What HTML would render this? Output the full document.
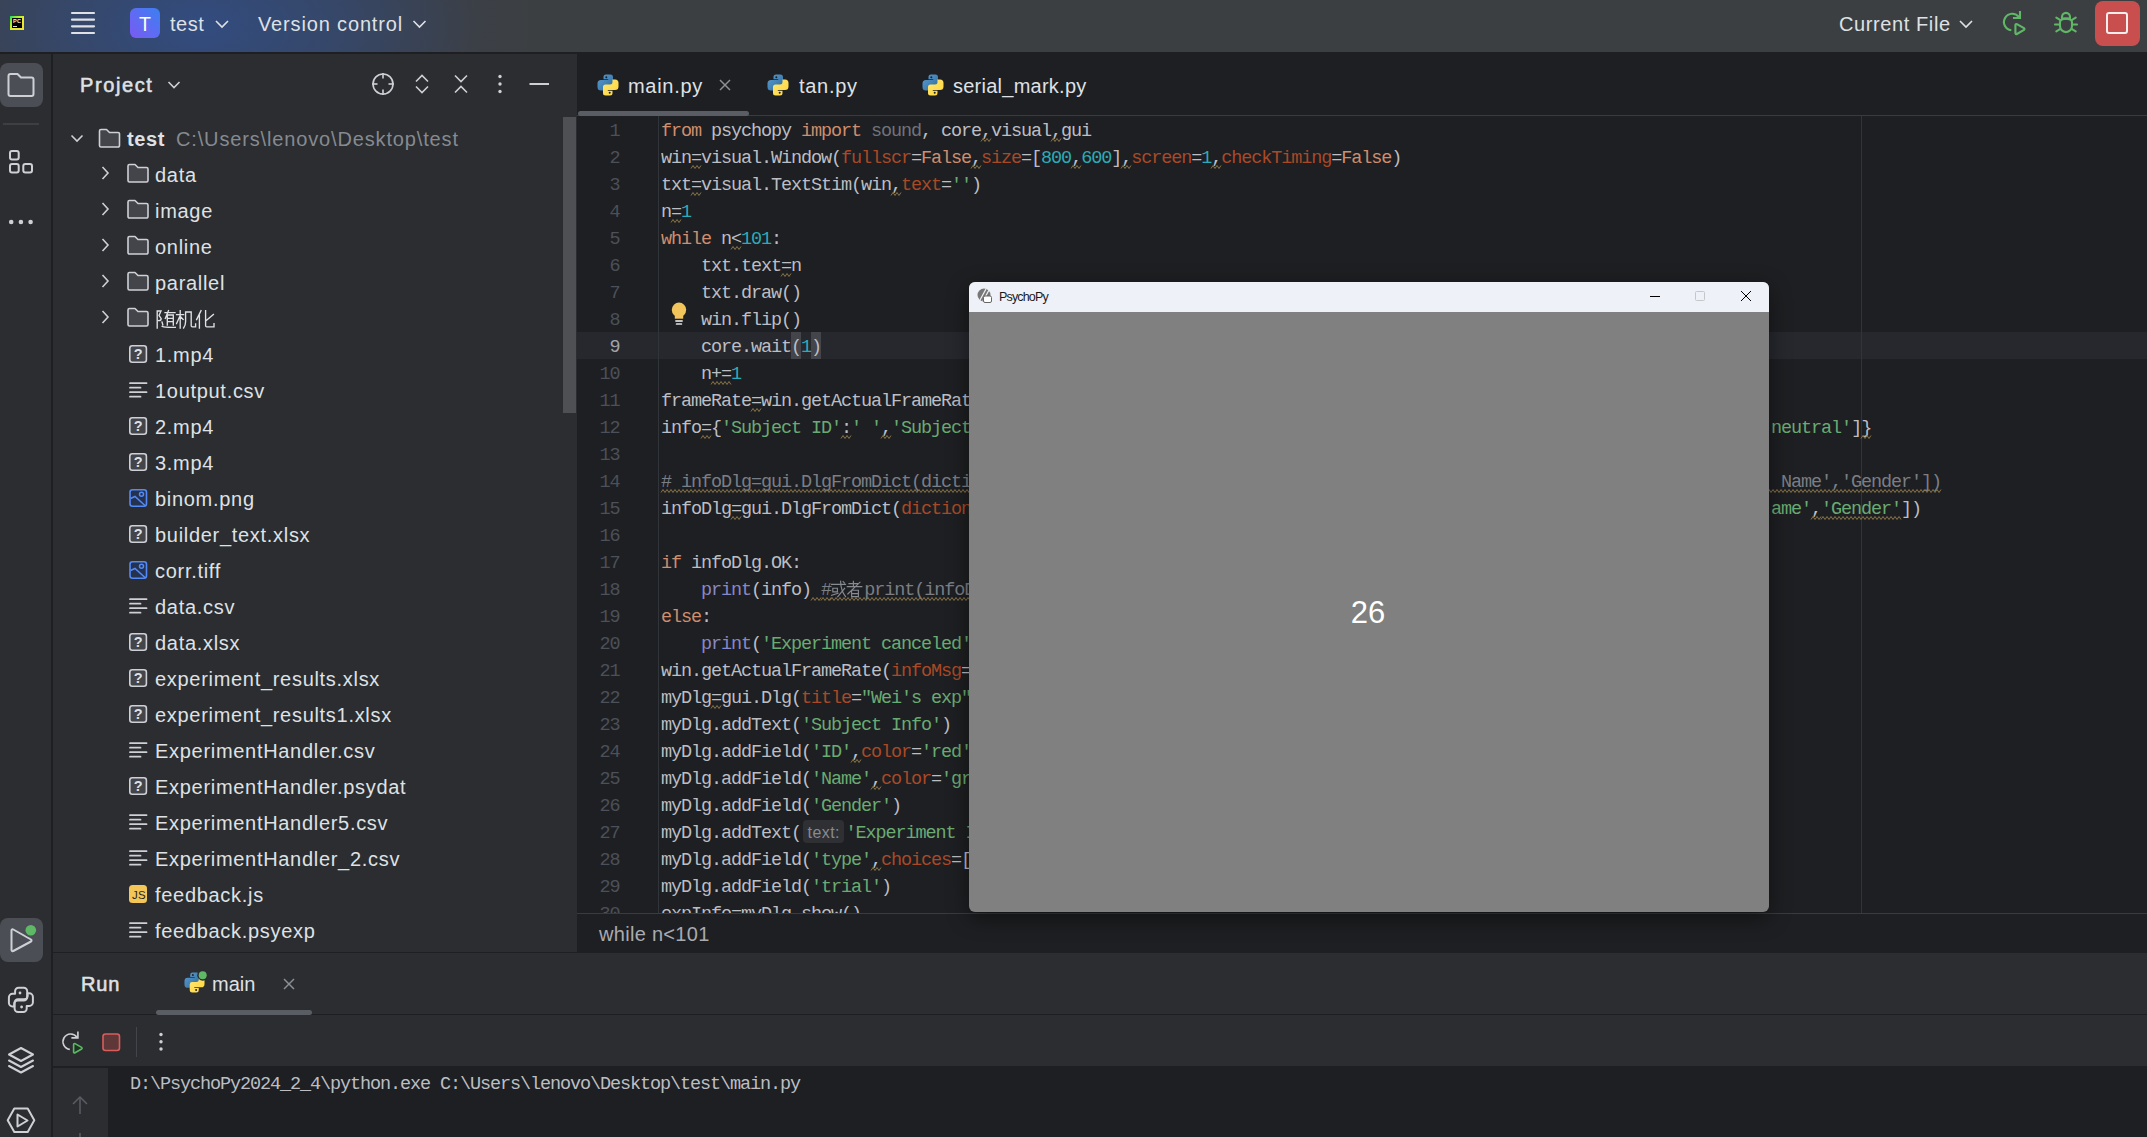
<!DOCTYPE html>
<html><head><meta charset="utf-8">
<style>
*{margin:0;padding:0;box-sizing:border-box}
html,body{width:2147px;height:1137px;overflow:hidden;background:#1e1f22}
body{position:relative;font-family:"Liberation Sans",sans-serif;color:#dfe1e5}
.a{position:absolute}
.t{position:absolute;white-space:pre;font-size:20px;line-height:20px}
svg{position:absolute;overflow:visible}
#title{left:0;top:0;width:2147px;height:52px;background:#3c3f41;overflow:hidden}
#title .glow{left:-150px;top:-170px;width:700px;height:392px;background:radial-gradient(closest-side,rgba(47,80,145,0.78) 0%,rgba(50,76,130,0.6) 40%,rgba(58,66,90,0.2) 80%,rgba(60,63,65,0) 100%)}
#strip{left:0;top:54px;width:51px;height:1083px;background:#2b2d30}
#proj{left:53px;top:54px;width:524px;height:898px;background:#2b2d30;overflow:hidden}
#editor{left:577px;top:54px;width:1570px;height:898px;background:#1e1f22;overflow:hidden}
#run{left:53px;top:953px;width:2094px;height:184px;background:#2b2d30;overflow:hidden}
.code{font-family:"Liberation Mono",monospace;font-size:18.5px;letter-spacing:-1.1017px;white-space:pre;color:#bcbec4}
.ln{position:absolute;height:27px;line-height:27px}
.kw{color:#cf8e6d}.num{color:#2aacb8}.str{color:#6aab73}.par{color:#aa4926}.cm{color:#7a7e85}.bi{color:#8888c6}.un{color:#6f737a}
.wv{text-decoration:underline wavy rgba(190,160,90,0.75);text-decoration-thickness:1px;text-underline-offset:3px}
</style></head><body>

<!-- TITLE BAR -->
<div id="title" class="a">
  <div class="a glow"></div>
  <!-- PC logo -->
  <div class="a" style="left:10px;top:16px;width:14.2px;height:14.2px;background:linear-gradient(135deg,#22d35a 0%,#9cf02a 28%,#e8ea2e 55%,#f2e232 100%)"></div>
  <div class="a" style="left:12.2px;top:18.2px;width:9.8px;height:9.8px;background:#000"></div>
  <div class="a" style="left:13px;top:19px;font:bold 5.6px/5.6px 'Liberation Sans';color:#eee;letter-spacing:0.2px">PC</div>
  <div class="a" style="left:13.2px;top:25.8px;width:3.6px;height:1px;background:#ddd"></div>
  <!-- hamburger -->
  <svg style="left:0;top:0" width="1" height="1"><g stroke="#dfe1e5" stroke-width="2.2" stroke-linecap="round"><line x1="72" y1="13" x2="94" y2="13"/><line x1="72" y1="19.7" x2="94" y2="19.7"/><line x1="72" y1="26.3" x2="94" y2="26.3"/><line x1="72" y1="33" x2="94" y2="33"/></g></svg>
  <!-- T badge -->
  <div class="a" style="left:130px;top:8px;width:30px;height:30px;border-radius:6px;background:linear-gradient(45deg,#7a5af2 0%,#5c6df3 50%,#3b7ff2 100%)"></div>
  <div class="t" style="left:130px;top:13.8px;width:30px;text-align:center;color:#fff;font-size:19.5px">T</div>
  <div class="t" style="left:170px;top:14px;letter-spacing:0.5px">test</div>
  <svg style="left:0;top:0" width="1" height="1"><polyline points="216,21 222,27 228,21" fill="none" stroke="#dfe1e5" stroke-width="1.6"/></svg>
  <div class="t" style="left:258px;top:14px;letter-spacing:0.85px">Version control</div>
  <svg style="left:0;top:0" width="1" height="1"><polyline points="413.5,21 419.5,27 425.5,21" fill="none" stroke="#dfe1e5" stroke-width="1.6"/></svg>
  <div class="t" style="left:1839px;top:14px;letter-spacing:0.6px">Current File</div>
  <svg style="left:0;top:0" width="1" height="1"><polyline points="1960,21 1966,27 1972,21" fill="none" stroke="#dfe1e5" stroke-width="1.6"/></svg>
  <!-- rerun green -->
  <svg style="left:0;top:0" width="1" height="1"><g fill="none" stroke="#5fb865" stroke-width="2.1" stroke-linejoin="round">
    <path d="M2011.3,30.3 A8.3,8.3 0 1 1 2019,17.2"/><polyline points="2020,11 2020,18 2013,18" stroke-linejoin="miter"/>
    <path d="M2015.4,25 a1,1 0 0 1 1.5,-0.9 L2024,28.2 a1,1 0 0 1 0,1.7 L2016.9,34 a1,1 0 0 1 -1.5,-0.9 Z"/></g></svg>
  <!-- bug -->
  <svg style="left:0;top:0" width="1" height="1"><g fill="none" stroke="#5fb865" stroke-width="2.1" stroke-linecap="round">
    <path d="M2060,22.1 a6,3.5 0 0 1 12,0 v4 a6,6 0 0 1 -12,0 z"/><path d="M2062,18.6 v-1.6 a4,4.1 0 0 1 8,0 v1.6 z"/>
    <line x1="2055" y1="24.5" x2="2059.5" y2="24.5"/><line x1="2072.5" y1="24.5" x2="2077" y2="24.5"/>
    <line x1="2056.3" y1="17.6" x2="2060" y2="19.8"/><line x1="2075.7" y1="17.6" x2="2072" y2="19.8"/>
    <line x1="2056.3" y1="31.3" x2="2060" y2="29.2"/><line x1="2075.7" y1="31.3" x2="2072" y2="29.2"/>
    </g></svg>
  <!-- stop -->
  <div class="a" style="left:2095px;top:1px;width:45px;height:45px;border-radius:8px;background:#c94f4f"></div>
  <div class="a" style="left:2106px;top:12px;width:22px;height:22px;border-radius:3px;border:2.2px solid #eee"></div>
</div>

<!-- LEFT STRIP -->
<div id="strip" class="a"></div>
<div class="a" style="left:0;top:63px;width:43px;height:44px;border-radius:8px;background:#4b4e54"></div>
<svg style="left:0;top:0" width="1" height="1"><g fill="none" stroke="#ced0d6" stroke-width="2" stroke-linejoin="round">
  <path d="M8.5,76 a2,2 0 0 1 2,-2 h7 l3.5,3.5 h10.5 a2,2 0 0 1 2,2 v14.5 a2,2 0 0 1 -2,2 h-21 a2,2 0 0 1 -2,-2 z"/></g></svg>
<div class="a" style="left:3px;top:123px;width:36px;height:2px;background:#3d3f43"></div>
<svg style="left:0;top:0" width="1" height="1"><g fill="none" stroke="#ced0d6" stroke-width="2">
  <rect x="10" y="151" width="8.7" height="8.5" rx="2"/><rect x="10" y="164" width="8.7" height="8.5" rx="2"/><rect x="23.3" y="164" width="8.7" height="8.5" rx="2"/></g>
  <g fill="#ced0d6"><circle cx="11.2" cy="222" r="2.3"/><circle cx="20.9" cy="222" r="2.3"/><circle cx="30.6" cy="222" r="2.3"/></g></svg>
<div class="a" style="left:0;top:918px;width:43px;height:44px;border-radius:8px;background:#4b4e54"></div>
<svg style="left:0;top:0" width="1" height="1">
  <path d="M11.5,930.5 L11.5,950 a1.2,1.2 0 0 0 1.8,1 L31,941.5 a1.2,1.2 0 0 0 0,-2 L13.3,929.5 a1.2,1.2 0 0 0 -1.8,1 z" fill="none" stroke="#ced0d6" stroke-width="2" stroke-linejoin="round"/>
  <circle cx="30.8" cy="930.3" r="7" fill="#4b4e54"/><circle cx="30.8" cy="930.3" r="5.3" fill="#5fb865"/>
  <!-- python console -->
  <g fill="none" stroke="#ced0d6" stroke-width="2" stroke-linejoin="round">
   <path d="M27.2,997 V991.2 A3.5,3.5 0 0 0 23.7,987.7 H18.6 A3.5,3.5 0 0 0 15.1,991.2 V993.8 H12.5 A3.6,3.6 0 0 0 8.9,997.4 V1002.8 A3.6,3.6 0 0 0 12.5,1006.4 H14.2 V1004 A3.5,3.5 0 0 1 17.7,1000.5 H23.7 A3.5,3.5 0 0 0 27.2,997 Z"/>
   <path transform="rotate(180 20.9 999.85)" d="M27.2,997 V991.2 A3.5,3.5 0 0 0 23.7,987.7 H18.6 A3.5,3.5 0 0 0 15.1,991.2 V993.8 H12.5 A3.6,3.6 0 0 0 8.9,997.4 V1002.8 A3.6,3.6 0 0 0 12.5,1006.4 H14.2 V1004 A3.5,3.5 0 0 1 17.7,1000.5 H23.7 A3.5,3.5 0 0 0 27.2,997 Z"/>
  </g>
  <circle cx="20" cy="993" r="1.4" fill="#ced0d6"/><circle cx="21.6" cy="1007" r="1.4" fill="#ced0d6"/>
  <!-- layers -->
  <g fill="none" stroke="#ced0d6" stroke-width="2" stroke-linejoin="round" stroke-linecap="round">
   <path d="M21,1048 L33,1054.5 L21,1061 L9,1054.5 Z"/><path d="M9,1060.5 L21,1067 L33,1060.5"/><path d="M9,1066 L21,1072.5 L33,1066"/>
  </g>
  <!-- services -->
  <g fill="none" stroke="#ced0d6" stroke-width="2" stroke-linejoin="round">
   <path d="M14.3,1108.6 h13.4 l6.6,11.7 l-6.6,11.7 h-13.4 l-6.6,-11.7 z"/><path d="M17.5,1114.5 v12 l10,-6 z"/>
  </g>
</svg>

<!-- PROJECT PANEL -->
<div id="proj" class="a"></div>
<div class="t" style="left:80px;top:75px;letter-spacing:1.6px;-webkit-text-stroke:0.55px #dfe1e5">Project</div>
<svg style="left:0;top:0" width="1" height="1"><g fill="none" stroke="#ced0d6" stroke-width="1.6"><polyline points="168.5,82 174,87.5 179.5,82"/><circle cx="383" cy="84" r="10"/><line x1="383" y1="73" x2="383" y2="78.5"/><line x1="383" y1="89.5" x2="383" y2="95"/><line x1="372" y1="84" x2="377.5" y2="84"/><line x1="388.5" y1="84" x2="394" y2="84"/><polyline points="416,81.5 422,75.5 428,81.5"/><polyline points="416,86.5 422,92.5 428,86.5"/><polyline points="455,75.5 461,81.5 467,75.5"/><polyline points="455,92.5 461,86.5 467,92.5"/><line x1="529.5" y1="84" x2="549" y2="84" stroke-width="2"/></g><g fill="#ced0d6"><circle cx="500" cy="76.5" r="1.7"/><circle cx="500" cy="84" r="1.7"/><circle cx="500" cy="91.5" r="1.7"/></g></svg>
<div class="a" style="left:563px;top:117px;width:13px;height:296px;background:#4f5054"></div>
<svg style="left:0;top:0" width="1" height="1"><polyline points="71.5,135.5 77,141 82.5,135.5" fill="none" stroke="#ced0d6" stroke-width="1.6"/><path d="M99.5,131 a1.5,1.5 0 0 1 1.5,-1.5 h5.5 l3,3 h8.5 a1.5,1.5 0 0 1 1.5,1.5 v11.5 a1.5,1.5 0 0 1 -1.5,1.5 h-17 a1.5,1.5 0 0 1 -1.5,-1.5 z" fill="#43454a" stroke="#ced0d6" stroke-width="1.6" stroke-linejoin="round"/></svg>
<div class="t" style="left:127px;top:129px;font-weight:bold;letter-spacing:0.6px">test</div>
<div class="t" style="left:176px;top:129px;color:#868a91;letter-spacing:0.85px">C:\Users\lenovo\Desktop\test</div>
<svg style="left:0;top:0" width="1" height="1"><polyline points="102.5,167.0 108,173.0 102.5,179.0" fill="none" stroke="#ced0d6" stroke-width="1.6"/><path d="M128,166.0 a1.5,1.5 0 0 1 1.5,-1.5 h5.5 l3,3 h8.5 a1.5,1.5 0 0 1 1.5,1.5 v11.5 a1.5,1.5 0 0 1 -1.5,1.5 h-17 a1.5,1.5 0 0 1 -1.5,-1.5 z" fill="#43454a" stroke="#ced0d6" stroke-width="1.6" stroke-linejoin="round"/></svg>
<div class="t" style="left:155px;top:165px;letter-spacing:0.7px">data</div>
<svg style="left:0;top:0" width="1" height="1"><polyline points="102.5,203.0 108,209.0 102.5,215.0" fill="none" stroke="#ced0d6" stroke-width="1.6"/><path d="M128,202.0 a1.5,1.5 0 0 1 1.5,-1.5 h5.5 l3,3 h8.5 a1.5,1.5 0 0 1 1.5,1.5 v11.5 a1.5,1.5 0 0 1 -1.5,1.5 h-17 a1.5,1.5 0 0 1 -1.5,-1.5 z" fill="#43454a" stroke="#ced0d6" stroke-width="1.6" stroke-linejoin="round"/></svg>
<div class="t" style="left:155px;top:201px;letter-spacing:0.7px">image</div>
<svg style="left:0;top:0" width="1" height="1"><polyline points="102.5,239.0 108,245.0 102.5,251.0" fill="none" stroke="#ced0d6" stroke-width="1.6"/><path d="M128,238.0 a1.5,1.5 0 0 1 1.5,-1.5 h5.5 l3,3 h8.5 a1.5,1.5 0 0 1 1.5,1.5 v11.5 a1.5,1.5 0 0 1 -1.5,1.5 h-17 a1.5,1.5 0 0 1 -1.5,-1.5 z" fill="#43454a" stroke="#ced0d6" stroke-width="1.6" stroke-linejoin="round"/></svg>
<div class="t" style="left:155px;top:237px;letter-spacing:0.7px">online</div>
<svg style="left:0;top:0" width="1" height="1"><polyline points="102.5,275.0 108,281.0 102.5,287.0" fill="none" stroke="#ced0d6" stroke-width="1.6"/><path d="M128,274.0 a1.5,1.5 0 0 1 1.5,-1.5 h5.5 l3,3 h8.5 a1.5,1.5 0 0 1 1.5,1.5 v11.5 a1.5,1.5 0 0 1 -1.5,1.5 h-17 a1.5,1.5 0 0 1 -1.5,-1.5 z" fill="#43454a" stroke="#ced0d6" stroke-width="1.6" stroke-linejoin="round"/></svg>
<div class="t" style="left:155px;top:273px;letter-spacing:0.7px">parallel</div>
<svg style="left:0;top:0" width="1" height="1"><polyline points="102.5,311.0 108,317.0 102.5,323.0" fill="none" stroke="#ced0d6" stroke-width="1.6"/><path d="M128,310.0 a1.5,1.5 0 0 1 1.5,-1.5 h5.5 l3,3 h8.5 a1.5,1.5 0 0 1 1.5,1.5 v11.5 a1.5,1.5 0 0 1 -1.5,1.5 h-17 a1.5,1.5 0 0 1 -1.5,-1.5 z" fill="#43454a" stroke="#ced0d6" stroke-width="1.6" stroke-linejoin="round"/></svg>
<svg style="left:0;top:0" width="1" height="1"><g fill="none" stroke="#dfe1e5" stroke-width="1.35" stroke-linecap="square"><g transform="translate(156,310)"><path d="M1.2,18 V1 H5 L3,5.5 L5.2,8.6 Q5,10.8 2.6,10.6"/><path d="M9,2.6 H19 M12.5,0.6 L9.3,8.4 M11.3,15 V5 H17.3 V15 M11.3,8.3 H17.3 M11.3,11.6 H17.3 M6,12 L6.8,14.8 M6.2,16.4 Q9,17.6 19.3,17.3"/></g><g transform="translate(176,310)"><path d="M0.6,4.6 H7.6 M4.2,0.6 V18 M4,5.8 L0.6,13.5 M4.6,6.8 L7.2,9.4 M9.6,2 V11.5 Q9.6,15.5 7.6,18 M9.6,2 H15.2 V15.8 Q15.2,16.8 16.4,16.8 H19.6 V14"/></g><g transform="translate(196,310)"><path d="M5,0.6 L0.6,9.6 M3.4,5.4 V18 M9.6,0.6 V15.8 Q9.6,16.9 10.8,16.9 H18 V13.6 M17.4,4.4 L9.6,11"/></g></g></svg>
<svg style="left:0;top:0" width="1" height="1"><rect x="129.8" y="345.7" width="16.6" height="16.6" rx="2.5" fill="#43454a" stroke="#ced0d6" stroke-width="1.6"/><text x="138.1" y="359.2" text-anchor="middle" font-family="Liberation Sans" font-weight="bold" font-size="14.5" fill="#dfe1e5">?</text></svg>
<div class="t" style="left:155px;top:345px;letter-spacing:0.7px">1.mp4</div>
<svg style="left:0;top:0" width="1" height="1"><g stroke="#ced0d6" stroke-width="1.8" stroke-linecap="round"><line x1="130" y1="383.2" x2="146.5" y2="383.2"/><line x1="130" y1="387.7" x2="140.5" y2="387.7"/><line x1="130" y1="392.2" x2="146.5" y2="392.2"/><line x1="130" y1="396.7" x2="140.5" y2="396.7"/></g></svg>
<div class="t" style="left:155px;top:381px;letter-spacing:0.7px">1output.csv</div>
<svg style="left:0;top:0" width="1" height="1"><rect x="129.8" y="417.7" width="16.6" height="16.6" rx="2.5" fill="#43454a" stroke="#ced0d6" stroke-width="1.6"/><text x="138.1" y="431.2" text-anchor="middle" font-family="Liberation Sans" font-weight="bold" font-size="14.5" fill="#dfe1e5">?</text></svg>
<div class="t" style="left:155px;top:417px;letter-spacing:0.7px">2.mp4</div>
<svg style="left:0;top:0" width="1" height="1"><rect x="129.8" y="453.7" width="16.6" height="16.6" rx="2.5" fill="#43454a" stroke="#ced0d6" stroke-width="1.6"/><text x="138.1" y="467.2" text-anchor="middle" font-family="Liberation Sans" font-weight="bold" font-size="14.5" fill="#dfe1e5">?</text></svg>
<div class="t" style="left:155px;top:453px;letter-spacing:0.7px">3.mp4</div>
<svg style="left:0;top:0" width="1" height="1"><rect x="130" y="489.8" width="16.5" height="16.5" rx="2.5" fill="#25324d" stroke="#548af7" stroke-width="1.6"/><circle cx="141.5" cy="494.2" r="2" fill="none" stroke="#548af7" stroke-width="1.5"/><polyline points="130.5,498.5 135,496.5 145.5,506.0" fill="none" stroke="#548af7" stroke-width="1.5"/></svg>
<div class="t" style="left:155px;top:489px;letter-spacing:0.7px">binom.png</div>
<svg style="left:0;top:0" width="1" height="1"><rect x="129.8" y="525.7" width="16.6" height="16.6" rx="2.5" fill="#43454a" stroke="#ced0d6" stroke-width="1.6"/><text x="138.1" y="539.2" text-anchor="middle" font-family="Liberation Sans" font-weight="bold" font-size="14.5" fill="#dfe1e5">?</text></svg>
<div class="t" style="left:155px;top:525px;letter-spacing:0.7px">builder_text.xlsx</div>
<svg style="left:0;top:0" width="1" height="1"><rect x="130" y="561.8" width="16.5" height="16.5" rx="2.5" fill="#25324d" stroke="#548af7" stroke-width="1.6"/><circle cx="141.5" cy="566.2" r="2" fill="none" stroke="#548af7" stroke-width="1.5"/><polyline points="130.5,570.5 135,568.5 145.5,578.0" fill="none" stroke="#548af7" stroke-width="1.5"/></svg>
<div class="t" style="left:155px;top:561px;letter-spacing:0.7px">corr.tiff</div>
<svg style="left:0;top:0" width="1" height="1"><g stroke="#ced0d6" stroke-width="1.8" stroke-linecap="round"><line x1="130" y1="599.2" x2="146.5" y2="599.2"/><line x1="130" y1="603.7" x2="140.5" y2="603.7"/><line x1="130" y1="608.2" x2="146.5" y2="608.2"/><line x1="130" y1="612.7" x2="140.5" y2="612.7"/></g></svg>
<div class="t" style="left:155px;top:597px;letter-spacing:0.7px">data.csv</div>
<svg style="left:0;top:0" width="1" height="1"><rect x="129.8" y="633.7" width="16.6" height="16.6" rx="2.5" fill="#43454a" stroke="#ced0d6" stroke-width="1.6"/><text x="138.1" y="647.2" text-anchor="middle" font-family="Liberation Sans" font-weight="bold" font-size="14.5" fill="#dfe1e5">?</text></svg>
<div class="t" style="left:155px;top:633px;letter-spacing:0.7px">data.xlsx</div>
<svg style="left:0;top:0" width="1" height="1"><rect x="129.8" y="669.7" width="16.6" height="16.6" rx="2.5" fill="#43454a" stroke="#ced0d6" stroke-width="1.6"/><text x="138.1" y="683.2" text-anchor="middle" font-family="Liberation Sans" font-weight="bold" font-size="14.5" fill="#dfe1e5">?</text></svg>
<div class="t" style="left:155px;top:669px;letter-spacing:0.7px">experiment_results.xlsx</div>
<svg style="left:0;top:0" width="1" height="1"><rect x="129.8" y="705.7" width="16.6" height="16.6" rx="2.5" fill="#43454a" stroke="#ced0d6" stroke-width="1.6"/><text x="138.1" y="719.2" text-anchor="middle" font-family="Liberation Sans" font-weight="bold" font-size="14.5" fill="#dfe1e5">?</text></svg>
<div class="t" style="left:155px;top:705px;letter-spacing:0.7px">experiment_results1.xlsx</div>
<svg style="left:0;top:0" width="1" height="1"><g stroke="#ced0d6" stroke-width="1.8" stroke-linecap="round"><line x1="130" y1="743.2" x2="146.5" y2="743.2"/><line x1="130" y1="747.7" x2="140.5" y2="747.7"/><line x1="130" y1="752.2" x2="146.5" y2="752.2"/><line x1="130" y1="756.7" x2="140.5" y2="756.7"/></g></svg>
<div class="t" style="left:155px;top:741px;letter-spacing:0.7px">ExperimentHandler.csv</div>
<svg style="left:0;top:0" width="1" height="1"><rect x="129.8" y="777.7" width="16.6" height="16.6" rx="2.5" fill="#43454a" stroke="#ced0d6" stroke-width="1.6"/><text x="138.1" y="791.2" text-anchor="middle" font-family="Liberation Sans" font-weight="bold" font-size="14.5" fill="#dfe1e5">?</text></svg>
<div class="t" style="left:155px;top:777px;letter-spacing:0.7px">ExperimentHandler.psydat</div>
<svg style="left:0;top:0" width="1" height="1"><g stroke="#ced0d6" stroke-width="1.8" stroke-linecap="round"><line x1="130" y1="815.2" x2="146.5" y2="815.2"/><line x1="130" y1="819.7" x2="140.5" y2="819.7"/><line x1="130" y1="824.2" x2="146.5" y2="824.2"/><line x1="130" y1="828.7" x2="140.5" y2="828.7"/></g></svg>
<div class="t" style="left:155px;top:813px;letter-spacing:0.7px">ExperimentHandler5.csv</div>
<svg style="left:0;top:0" width="1" height="1"><g stroke="#ced0d6" stroke-width="1.8" stroke-linecap="round"><line x1="130" y1="851.2" x2="146.5" y2="851.2"/><line x1="130" y1="855.7" x2="140.5" y2="855.7"/><line x1="130" y1="860.2" x2="146.5" y2="860.2"/><line x1="130" y1="864.7" x2="140.5" y2="864.7"/></g></svg>
<div class="t" style="left:155px;top:849px;letter-spacing:0.7px">ExperimentHandler_2.csv</div>
<div class="a" style="left:129px;top:884.8px;width:18.2px;height:18.2px;border-radius:3.5px;background:#f4c657"></div><div class="a" style="left:131px;top:890.4px;width:16px;text-align:center;font:11.5px/11.5px 'Liberation Sans';color:#1e1f22;letter-spacing:0.3px">JS</div>
<div class="t" style="left:155px;top:885px;letter-spacing:0.7px">feedback.js</div>
<svg style="left:0;top:0" width="1" height="1"><g stroke="#ced0d6" stroke-width="1.8" stroke-linecap="round"><line x1="130" y1="923.2" x2="146.5" y2="923.2"/><line x1="130" y1="927.7" x2="140.5" y2="927.7"/><line x1="130" y1="932.2" x2="146.5" y2="932.2"/><line x1="130" y1="936.7" x2="140.5" y2="936.7"/></g></svg>
<div class="t" style="left:155px;top:921px;letter-spacing:0.7px">feedback.psyexp</div>

<!-- EDITOR -->
<div id="editor" class="a"></div>
<div class="a" style="left:577px;top:332px;width:1570px;height:27px;background:#26282e"></div>
<div class="a" style="left:790.5px;top:332px;width:10px;height:27px;background:#43454a"></div>
<div class="a" style="left:810.5px;top:332px;width:10px;height:27px;background:#43454a"></div>
<div class="a" style="left:658px;top:116px;width:1px;height:797px;background:#313438"></div>
<div class="a" style="left:1861px;top:116px;width:1px;height:797px;background:#313438"></div>
<div class="a" style="left:577px;top:115px;width:1570px;height:1px;background:#393b40"></div>
<div class="a" style="left:578px;top:111px;width:171px;height:5px;border-radius:2.5px;background:#5a5d63"></div>
<div class="a" style="left:577px;top:913px;width:1570px;height:1px;background:#393b40"></div>
<svg style="left:597.0px;top:74.0px" width="22" height="22" viewBox="0 0 22 22"><defs><linearGradient id="pb" x1="0" y1="0" x2="1" y2="1"><stop offset="0" stop-color="#5a9fd4"/><stop offset="1" stop-color="#306998"/></linearGradient><linearGradient id="py" x1="0" y1="0" x2="1" y2="1"><stop offset="0" stop-color="#ffe873"/><stop offset="1" stop-color="#ffd43b"/></linearGradient></defs><path d="M6.5,3 a2.5,2.5 0 0 1 2.5,-2.5 h4.5 a2.5,2.5 0 0 1 2.5,2.5 v6 a2.5,2.5 0 0 1 -2.5,2.5 h-4.5 a2.5,2.5 0 0 0 -2.5,2.5 v2.5 h-2.5 a3.5,3.5 0 0 1 -3.5,-3.5 v-3.5 a3.5,3.5 0 0 1 3.5,-3.5 h7.2 v-0.8 h-4.7 z" fill="url(#pb)"/><path d="M15.5,19 a2.5,2.5 0 0 1 -2.5,2.5 h-4.5 a2.5,2.5 0 0 1 -2.5,-2.5 v-6 a2.5,2.5 0 0 1 2.5,-2.5 h4.5 a2.5,2.5 0 0 0 2.5,-2.5 v-2.5 h2.5 a3.5,3.5 0 0 1 3.5,3.5 v3.5 a3.5,3.5 0 0 1 -3.5,3.5 h-7.2 v0.8 h4.7 z" fill="url(#py)"/><circle cx="9.3" cy="3.2" r="1" fill="#1e1f22"/><circle cx="12.7" cy="18.8" r="1" fill="#1e1f22"/></svg>
<div class="t" style="left:628px;top:76px;letter-spacing:0.7px">main.py</div>
<svg style="left:0;top:0" width="1" height="1"><g stroke="#8c8f94" stroke-width="1.5"><line x1="720" y1="80" x2="730" y2="90"/><line x1="730" y1="80" x2="720" y2="90"/></g></svg>
<svg style="left:767.0px;top:74.0px" width="22" height="22" viewBox="0 0 22 22"><defs><linearGradient id="pb" x1="0" y1="0" x2="1" y2="1"><stop offset="0" stop-color="#5a9fd4"/><stop offset="1" stop-color="#306998"/></linearGradient><linearGradient id="py" x1="0" y1="0" x2="1" y2="1"><stop offset="0" stop-color="#ffe873"/><stop offset="1" stop-color="#ffd43b"/></linearGradient></defs><path d="M6.5,3 a2.5,2.5 0 0 1 2.5,-2.5 h4.5 a2.5,2.5 0 0 1 2.5,2.5 v6 a2.5,2.5 0 0 1 -2.5,2.5 h-4.5 a2.5,2.5 0 0 0 -2.5,2.5 v2.5 h-2.5 a3.5,3.5 0 0 1 -3.5,-3.5 v-3.5 a3.5,3.5 0 0 1 3.5,-3.5 h7.2 v-0.8 h-4.7 z" fill="url(#pb)"/><path d="M15.5,19 a2.5,2.5 0 0 1 -2.5,2.5 h-4.5 a2.5,2.5 0 0 1 -2.5,-2.5 v-6 a2.5,2.5 0 0 1 2.5,-2.5 h4.5 a2.5,2.5 0 0 0 2.5,-2.5 v-2.5 h2.5 a3.5,3.5 0 0 1 3.5,3.5 v3.5 a3.5,3.5 0 0 1 -3.5,3.5 h-7.2 v0.8 h4.7 z" fill="url(#py)"/><circle cx="9.3" cy="3.2" r="1" fill="#1e1f22"/><circle cx="12.7" cy="18.8" r="1" fill="#1e1f22"/></svg>
<div class="t" style="left:799px;top:76px;letter-spacing:0.7px">tan.py</div>
<svg style="left:922.0px;top:74.0px" width="22" height="22" viewBox="0 0 22 22"><defs><linearGradient id="pb" x1="0" y1="0" x2="1" y2="1"><stop offset="0" stop-color="#5a9fd4"/><stop offset="1" stop-color="#306998"/></linearGradient><linearGradient id="py" x1="0" y1="0" x2="1" y2="1"><stop offset="0" stop-color="#ffe873"/><stop offset="1" stop-color="#ffd43b"/></linearGradient></defs><path d="M6.5,3 a2.5,2.5 0 0 1 2.5,-2.5 h4.5 a2.5,2.5 0 0 1 2.5,2.5 v6 a2.5,2.5 0 0 1 -2.5,2.5 h-4.5 a2.5,2.5 0 0 0 -2.5,2.5 v2.5 h-2.5 a3.5,3.5 0 0 1 -3.5,-3.5 v-3.5 a3.5,3.5 0 0 1 3.5,-3.5 h7.2 v-0.8 h-4.7 z" fill="url(#pb)"/><path d="M15.5,19 a2.5,2.5 0 0 1 -2.5,2.5 h-4.5 a2.5,2.5 0 0 1 -2.5,-2.5 v-6 a2.5,2.5 0 0 1 2.5,-2.5 h4.5 a2.5,2.5 0 0 0 2.5,-2.5 v-2.5 h2.5 a3.5,3.5 0 0 1 3.5,3.5 v3.5 a3.5,3.5 0 0 1 -3.5,3.5 h-7.2 v0.8 h4.7 z" fill="url(#py)"/><circle cx="9.3" cy="3.2" r="1" fill="#1e1f22"/><circle cx="12.7" cy="18.8" r="1" fill="#1e1f22"/></svg>
<div class="t" style="left:953px;top:76px;letter-spacing:0.25px">serial_mark.py</div>
<div class="a" style="left:0;top:116px;width:658px;height:797px;overflow:hidden">
<div class="code ln" style="left:559.5px;top:2px;width:60px;text-align:right;color:#4b5059">1</div>
<div class="code ln" style="left:559.5px;top:29px;width:60px;text-align:right;color:#4b5059">2</div>
<div class="code ln" style="left:559.5px;top:56px;width:60px;text-align:right;color:#4b5059">3</div>
<div class="code ln" style="left:559.5px;top:83px;width:60px;text-align:right;color:#4b5059">4</div>
<div class="code ln" style="left:559.5px;top:110px;width:60px;text-align:right;color:#4b5059">5</div>
<div class="code ln" style="left:559.5px;top:137px;width:60px;text-align:right;color:#4b5059">6</div>
<div class="code ln" style="left:559.5px;top:164px;width:60px;text-align:right;color:#4b5059">7</div>
<div class="code ln" style="left:559.5px;top:191px;width:60px;text-align:right;color:#4b5059">8</div>
<div class="code ln" style="left:559.5px;top:218px;width:60px;text-align:right;color:#a1a3ab">9</div>
<div class="code ln" style="left:559.5px;top:245px;width:60px;text-align:right;color:#4b5059">10</div>
<div class="code ln" style="left:559.5px;top:272px;width:60px;text-align:right;color:#4b5059">11</div>
<div class="code ln" style="left:559.5px;top:299px;width:60px;text-align:right;color:#4b5059">12</div>
<div class="code ln" style="left:559.5px;top:326px;width:60px;text-align:right;color:#4b5059">13</div>
<div class="code ln" style="left:559.5px;top:353px;width:60px;text-align:right;color:#4b5059">14</div>
<div class="code ln" style="left:559.5px;top:380px;width:60px;text-align:right;color:#4b5059">15</div>
<div class="code ln" style="left:559.5px;top:407px;width:60px;text-align:right;color:#4b5059">16</div>
<div class="code ln" style="left:559.5px;top:434px;width:60px;text-align:right;color:#4b5059">17</div>
<div class="code ln" style="left:559.5px;top:461px;width:60px;text-align:right;color:#4b5059">18</div>
<div class="code ln" style="left:559.5px;top:488px;width:60px;text-align:right;color:#4b5059">19</div>
<div class="code ln" style="left:559.5px;top:515px;width:60px;text-align:right;color:#4b5059">20</div>
<div class="code ln" style="left:559.5px;top:542px;width:60px;text-align:right;color:#4b5059">21</div>
<div class="code ln" style="left:559.5px;top:569px;width:60px;text-align:right;color:#4b5059">22</div>
<div class="code ln" style="left:559.5px;top:596px;width:60px;text-align:right;color:#4b5059">23</div>
<div class="code ln" style="left:559.5px;top:623px;width:60px;text-align:right;color:#4b5059">24</div>
<div class="code ln" style="left:559.5px;top:650px;width:60px;text-align:right;color:#4b5059">25</div>
<div class="code ln" style="left:559.5px;top:677px;width:60px;text-align:right;color:#4b5059">26</div>
<div class="code ln" style="left:559.5px;top:704px;width:60px;text-align:right;color:#4b5059">27</div>
<div class="code ln" style="left:559.5px;top:731px;width:60px;text-align:right;color:#4b5059">28</div>
<div class="code ln" style="left:559.5px;top:758px;width:60px;text-align:right;color:#4b5059">29</div>
<div class="code ln" style="left:559.5px;top:785px;width:60px;text-align:right;color:#4b5059">30</div>
</div>
<svg style="left:0;top:0" width="1" height="1"><g fill="none" stroke="#868a91" stroke-width="1.15" stroke-linecap="square"><path d="M831.5,584.3 H845.5 M832.8,588.2 H837.4 V591.8 H832.8 Z M831.6,595.3 L838,593.3 M840.6,581.2 Q840.8,590.5 845.6,596.6 M844.6,588.4 L837.6,596.8 M843.1,581.6 L844.4,582.9"/><path d="M849,583.6 H857.5 M853.4,581.2 V586.5 M847.3,586.6 H861.8 M860,582.2 L847.8,594 M851.6,597 V590.2 H858.4 V597 M851.6,593.6 H858.4 M851.6,596.6 H858.4"/></g></svg>
<div class="a" style="left:803px;top:820px;width:41px;height:23px;border-radius:4px;background:#2e3034"></div>
<div class="t" style="left:807.5px;top:824.8px;font-size:16px;line-height:16px;color:#868a91;letter-spacing:0.45px">text:</div>
<div class="a" style="left:661px;top:118px;width:1486px;height:795px;overflow:hidden">
<div class="code ln" style="left:0;top:0px"><span class="kw">from</span> psychopy <span class="kw">import</span> <span class="un">sound</span>, core,visual,gui</div>
<div class="code ln" style="left:0;top:27px">win=visual.Window(<span class="par">fullscr</span>=<span class="kw">False</span>,<span class="par">size</span>=[<span class="num">800</span>,<span class="num">600</span>],<span class="par">screen</span>=<span class="num">1</span>,<span class="par">checkTiming</span>=<span class="kw">False</span>)</div>
<div class="code ln" style="left:0;top:54px">txt=visual.TextStim(win,<span class="par">text</span>=<span class="str">&#x27;&#x27;</span>)</div>
<div class="code ln" style="left:0;top:81px">n=<span class="num">1</span></div>
<div class="code ln" style="left:0;top:108px"><span class="kw">while</span> n&lt;<span class="num">101</span>:</div>
<div class="code ln" style="left:0;top:135px">    txt.text=n</div>
<div class="code ln" style="left:0;top:162px">    txt.draw()</div>
<div class="code ln" style="left:0;top:189px">    win.flip()</div>
<div class="code ln" style="left:0;top:216px">    core.wait(<span class="num">1</span>)</div>
<div class="code ln" style="left:0;top:243px">    n+=<span class="num">1</span></div>
<div class="code ln" style="left:0;top:270px">frameRate=win.getActualFrameRate()</div>
<div class="code ln" style="left:0;top:297px">info={<span class="str">&#x27;Subject ID&#x27;</span>:<span class="str">&#x27; &#x27;</span>,<span class="str">&#x27;Subject</span>                                                                                <span class="str">neutral&#x27;</span>]}</div>
<div class="code ln" style="left:0;top:324px"></div>
<div class="code ln" style="left:0;top:351px"><span class="cm"># infoDlg=gui.DlgFromDict(dicti</span><span class="cm">                                                                                </span><span class="cm"> Name&#x27;,&#x27;Gender&#x27;])</span></div>
<div class="code ln" style="left:0;top:378px">infoDlg=gui.DlgFromDict(<span class="par">diction</span>                                                                                <span class="str">ame&#x27;</span>,<span class="str">&#x27;Gender&#x27;</span>])</div>
<div class="code ln" style="left:0;top:405px"></div>
<div class="code ln" style="left:0;top:432px"><span class="kw">if</span> infoDlg.OK:</div>
<div class="code ln" style="left:0;top:459px">    <span class="bi">print</span>(info) <span class="cm">#</span><span style="display:inline-block;width:33.3px"></span><span class="cm">print(infoDlg.data)</span></div>
<div class="code ln" style="left:0;top:486px"><span class="kw">else</span>:</div>
<div class="code ln" style="left:0;top:513px">    <span class="bi">print</span>(<span class="str">&#x27;Experiment canceled&#x27;</span>)</div>
<div class="code ln" style="left:0;top:540px">win.getActualFrameRate(<span class="par">infoMsg</span>=<span class="str">&#x27;x&#x27;</span>)</div>
<div class="code ln" style="left:0;top:567px">myDlg=gui.Dlg(<span class="par">title</span>=<span class="str">&quot;Wei&#x27;s exp&quot;</span>)</div>
<div class="code ln" style="left:0;top:594px">myDlg.addText(<span class="str">&#x27;Subject Info&#x27;</span>)</div>
<div class="code ln" style="left:0;top:621px">myDlg.addField(<span class="str">&#x27;ID&#x27;</span>,<span class="par">color</span>=<span class="str">&#x27;red&#x27;</span>)</div>
<div class="code ln" style="left:0;top:648px">myDlg.addField(<span class="str">&#x27;Name&#x27;</span>,<span class="par">color</span>=<span class="str">&#x27;green&#x27;</span>)</div>
<div class="code ln" style="left:0;top:675px">myDlg.addField(<span class="str">&#x27;Gender&#x27;</span>)</div>
<div class="code ln" style="left:0;top:702px">myDlg.addText(<span style="display:inline-block;width:44.5px"></span><span class="str">&#x27;Experiment Info&#x27;</span>)</div>
<div class="code ln" style="left:0;top:729px">myDlg.addField(<span class="str">&#x27;type&#x27;</span>,<span class="par">choices</span>=[<span class="str">&#x27;a&#x27;</span>])</div>
<div class="code ln" style="left:0;top:756px">myDlg.addField(<span class="str">&#x27;trial&#x27;</span>)</div>
<div class="code ln" style="left:0;top:783px">expInfo=myDlg.show()</div>
</div>
<div class="a" style="left:0;top:0;width:2147px;height:913px;overflow:hidden"><svg style="left:0;top:0" width="1" height="1"><g fill="none" stroke="#8a7548" stroke-width="1"><path d="M981.0,141.5 L983.0,138.5 L985.0,141.5 L987.0,138.5 L989.0,141.5 L991.0,138.5"/><path d="M1051.0,141.5 L1053.0,138.5 L1055.0,141.5 L1057.0,138.5 L1059.0,141.5 L1061.0,138.5"/><path d="M691.0,168.5 L693.0,165.5 L695.0,168.5 L697.0,165.5 L699.0,168.5 L701.0,165.5"/><path d="M971.0,168.5 L973.0,165.5 L975.0,168.5 L977.0,165.5 L979.0,168.5 L981.0,165.5"/><path d="M1071.0,168.5 L1073.0,165.5 L1075.0,168.5 L1077.0,165.5 L1079.0,168.5 L1081.0,165.5"/><path d="M1121.0,168.5 L1123.0,165.5 L1125.0,168.5 L1127.0,165.5 L1129.0,168.5 L1131.0,165.5"/><path d="M1211.0,168.5 L1213.0,165.5 L1215.0,168.5 L1217.0,165.5 L1219.0,168.5 L1221.0,165.5"/><path d="M691.0,195.5 L693.0,192.5 L695.0,195.5 L697.0,192.5 L699.0,195.5 L701.0,192.5"/><path d="M891.0,195.5 L893.0,192.5 L895.0,195.5 L897.0,192.5 L899.0,195.5 L901.0,192.5"/><path d="M671.0,222.5 L673.0,219.5 L675.0,222.5 L677.0,219.5 L679.0,222.5 L681.0,219.5"/><path d="M731.0,249.5 L733.0,246.5 L735.0,249.5 L737.0,246.5 L739.0,249.5 L741.0,246.5"/><path d="M781.0,276.5 L783.0,273.5 L785.0,276.5 L787.0,273.5 L789.0,276.5 L791.0,273.5"/><path d="M711.0,384.5 L713.0,381.5 L715.0,384.5 L717.0,381.5 L719.0,384.5 L721.0,381.5 L723.0,384.5 L725.0,381.5 L727.0,384.5 L729.0,381.5 L731.0,384.5"/><path d="M751.0,411.5 L753.0,408.5 L755.0,411.5 L757.0,408.5 L759.0,411.5 L761.0,408.5"/><path d="M701.0,438.5 L703.0,435.5 L705.0,438.5 L707.0,435.5 L709.0,438.5 L711.0,435.5"/><path d="M841.0,438.5 L843.0,435.5 L845.0,438.5 L847.0,435.5 L849.0,438.5 L851.0,435.5"/><path d="M881.0,438.5 L883.0,435.5 L885.0,438.5 L887.0,435.5 L889.0,438.5 L891.0,435.5"/><path d="M1861.0,438.5 L1863.0,435.5 L1865.0,438.5 L1867.0,435.5 L1869.0,438.5 L1871.0,435.5"/><path d="M661.0,492.5 L663.0,489.5 L665.0,492.5 L667.0,489.5 L669.0,492.5 L671.0,489.5 L673.0,492.5 L675.0,489.5 L677.0,492.5 L679.0,489.5 L681.0,492.5 L683.0,489.5 L685.0,492.5 L687.0,489.5 L689.0,492.5 L691.0,489.5 L693.0,492.5 L695.0,489.5 L697.0,492.5 L699.0,489.5 L701.0,492.5 L703.0,489.5 L705.0,492.5 L707.0,489.5 L709.0,492.5 L711.0,489.5 L713.0,492.5 L715.0,489.5 L717.0,492.5 L719.0,489.5 L721.0,492.5 L723.0,489.5 L725.0,492.5 L727.0,489.5 L729.0,492.5 L731.0,489.5 L733.0,492.5 L735.0,489.5 L737.0,492.5 L739.0,489.5 L741.0,492.5 L743.0,489.5 L745.0,492.5 L747.0,489.5 L749.0,492.5 L751.0,489.5 L753.0,492.5 L755.0,489.5 L757.0,492.5 L759.0,489.5 L761.0,492.5 L763.0,489.5 L765.0,492.5 L767.0,489.5 L769.0,492.5 L771.0,489.5 L773.0,492.5 L775.0,489.5 L777.0,492.5 L779.0,489.5 L781.0,492.5 L783.0,489.5 L785.0,492.5 L787.0,489.5 L789.0,492.5 L791.0,489.5 L793.0,492.5 L795.0,489.5 L797.0,492.5 L799.0,489.5 L801.0,492.5 L803.0,489.5 L805.0,492.5 L807.0,489.5 L809.0,492.5 L811.0,489.5 L813.0,492.5 L815.0,489.5 L817.0,492.5 L819.0,489.5 L821.0,492.5 L823.0,489.5 L825.0,492.5 L827.0,489.5 L829.0,492.5 L831.0,489.5 L833.0,492.5 L835.0,489.5 L837.0,492.5 L839.0,489.5 L841.0,492.5 L843.0,489.5 L845.0,492.5 L847.0,489.5 L849.0,492.5 L851.0,489.5 L853.0,492.5 L855.0,489.5 L857.0,492.5 L859.0,489.5 L861.0,492.5 L863.0,489.5 L865.0,492.5 L867.0,489.5 L869.0,492.5 L871.0,489.5 L873.0,492.5 L875.0,489.5 L877.0,492.5 L879.0,489.5 L881.0,492.5 L883.0,489.5 L885.0,492.5 L887.0,489.5 L889.0,492.5 L891.0,489.5 L893.0,492.5 L895.0,489.5 L897.0,492.5 L899.0,489.5 L901.0,492.5 L903.0,489.5 L905.0,492.5 L907.0,489.5 L909.0,492.5 L911.0,489.5 L913.0,492.5 L915.0,489.5 L917.0,492.5 L919.0,489.5 L921.0,492.5 L923.0,489.5 L925.0,492.5 L927.0,489.5 L929.0,492.5 L931.0,489.5 L933.0,492.5 L935.0,489.5 L937.0,492.5 L939.0,489.5 L941.0,492.5 L943.0,489.5 L945.0,492.5 L947.0,489.5 L949.0,492.5 L951.0,489.5 L953.0,492.5 L955.0,489.5 L957.0,492.5 L959.0,489.5 L961.0,492.5 L963.0,489.5 L965.0,492.5 L967.0,489.5 L969.0,492.5 L971.0,489.5"/><path d="M971.0,492.5 L973.0,489.5 L975.0,492.5 L977.0,489.5 L979.0,492.5 L981.0,489.5 L983.0,492.5 L985.0,489.5 L987.0,492.5 L989.0,489.5 L991.0,492.5 L993.0,489.5 L995.0,492.5 L997.0,489.5 L999.0,492.5 L1001.0,489.5 L1003.0,492.5 L1005.0,489.5 L1007.0,492.5 L1009.0,489.5 L1011.0,492.5 L1013.0,489.5 L1015.0,492.5 L1017.0,489.5 L1019.0,492.5 L1021.0,489.5 L1023.0,492.5 L1025.0,489.5 L1027.0,492.5 L1029.0,489.5 L1031.0,492.5 L1033.0,489.5 L1035.0,492.5 L1037.0,489.5 L1039.0,492.5 L1041.0,489.5 L1043.0,492.5 L1045.0,489.5 L1047.0,492.5 L1049.0,489.5 L1051.0,492.5 L1053.0,489.5 L1055.0,492.5 L1057.0,489.5 L1059.0,492.5 L1061.0,489.5 L1063.0,492.5 L1065.0,489.5 L1067.0,492.5 L1069.0,489.5 L1071.0,492.5 L1073.0,489.5 L1075.0,492.5 L1077.0,489.5 L1079.0,492.5 L1081.0,489.5 L1083.0,492.5 L1085.0,489.5 L1087.0,492.5 L1089.0,489.5 L1091.0,492.5 L1093.0,489.5 L1095.0,492.5 L1097.0,489.5 L1099.0,492.5 L1101.0,489.5 L1103.0,492.5 L1105.0,489.5 L1107.0,492.5 L1109.0,489.5 L1111.0,492.5 L1113.0,489.5 L1115.0,492.5 L1117.0,489.5 L1119.0,492.5 L1121.0,489.5 L1123.0,492.5 L1125.0,489.5 L1127.0,492.5 L1129.0,489.5 L1131.0,492.5 L1133.0,489.5 L1135.0,492.5 L1137.0,489.5 L1139.0,492.5 L1141.0,489.5 L1143.0,492.5 L1145.0,489.5 L1147.0,492.5 L1149.0,489.5 L1151.0,492.5 L1153.0,489.5 L1155.0,492.5 L1157.0,489.5 L1159.0,492.5 L1161.0,489.5 L1163.0,492.5 L1165.0,489.5 L1167.0,492.5 L1169.0,489.5 L1171.0,492.5 L1173.0,489.5 L1175.0,492.5 L1177.0,489.5 L1179.0,492.5 L1181.0,489.5 L1183.0,492.5 L1185.0,489.5 L1187.0,492.5 L1189.0,489.5 L1191.0,492.5 L1193.0,489.5 L1195.0,492.5 L1197.0,489.5 L1199.0,492.5 L1201.0,489.5 L1203.0,492.5 L1205.0,489.5 L1207.0,492.5 L1209.0,489.5 L1211.0,492.5 L1213.0,489.5 L1215.0,492.5 L1217.0,489.5 L1219.0,492.5 L1221.0,489.5 L1223.0,492.5 L1225.0,489.5 L1227.0,492.5 L1229.0,489.5 L1231.0,492.5 L1233.0,489.5 L1235.0,492.5 L1237.0,489.5 L1239.0,492.5 L1241.0,489.5 L1243.0,492.5 L1245.0,489.5 L1247.0,492.5 L1249.0,489.5 L1251.0,492.5 L1253.0,489.5 L1255.0,492.5 L1257.0,489.5 L1259.0,492.5 L1261.0,489.5 L1263.0,492.5 L1265.0,489.5 L1267.0,492.5 L1269.0,489.5 L1271.0,492.5 L1273.0,489.5 L1275.0,492.5 L1277.0,489.5 L1279.0,492.5 L1281.0,489.5 L1283.0,492.5 L1285.0,489.5 L1287.0,492.5 L1289.0,489.5 L1291.0,492.5 L1293.0,489.5 L1295.0,492.5 L1297.0,489.5 L1299.0,492.5 L1301.0,489.5 L1303.0,492.5 L1305.0,489.5 L1307.0,492.5 L1309.0,489.5 L1311.0,492.5 L1313.0,489.5 L1315.0,492.5 L1317.0,489.5 L1319.0,492.5 L1321.0,489.5 L1323.0,492.5 L1325.0,489.5 L1327.0,492.5 L1329.0,489.5 L1331.0,492.5 L1333.0,489.5 L1335.0,492.5 L1337.0,489.5 L1339.0,492.5 L1341.0,489.5 L1343.0,492.5 L1345.0,489.5 L1347.0,492.5 L1349.0,489.5 L1351.0,492.5 L1353.0,489.5 L1355.0,492.5 L1357.0,489.5 L1359.0,492.5 L1361.0,489.5 L1363.0,492.5 L1365.0,489.5 L1367.0,492.5 L1369.0,489.5 L1371.0,492.5 L1373.0,489.5 L1375.0,492.5 L1377.0,489.5 L1379.0,492.5 L1381.0,489.5 L1383.0,492.5 L1385.0,489.5 L1387.0,492.5 L1389.0,489.5 L1391.0,492.5 L1393.0,489.5 L1395.0,492.5 L1397.0,489.5 L1399.0,492.5 L1401.0,489.5 L1403.0,492.5 L1405.0,489.5 L1407.0,492.5 L1409.0,489.5 L1411.0,492.5 L1413.0,489.5 L1415.0,492.5 L1417.0,489.5 L1419.0,492.5 L1421.0,489.5 L1423.0,492.5 L1425.0,489.5 L1427.0,492.5 L1429.0,489.5 L1431.0,492.5 L1433.0,489.5 L1435.0,492.5 L1437.0,489.5 L1439.0,492.5 L1441.0,489.5 L1443.0,492.5 L1445.0,489.5 L1447.0,492.5 L1449.0,489.5 L1451.0,492.5 L1453.0,489.5 L1455.0,492.5 L1457.0,489.5 L1459.0,492.5 L1461.0,489.5 L1463.0,492.5 L1465.0,489.5 L1467.0,492.5 L1469.0,489.5 L1471.0,492.5 L1473.0,489.5 L1475.0,492.5 L1477.0,489.5 L1479.0,492.5 L1481.0,489.5 L1483.0,492.5 L1485.0,489.5 L1487.0,492.5 L1489.0,489.5 L1491.0,492.5 L1493.0,489.5 L1495.0,492.5 L1497.0,489.5 L1499.0,492.5 L1501.0,489.5 L1503.0,492.5 L1505.0,489.5 L1507.0,492.5 L1509.0,489.5 L1511.0,492.5 L1513.0,489.5 L1515.0,492.5 L1517.0,489.5 L1519.0,492.5 L1521.0,489.5 L1523.0,492.5 L1525.0,489.5 L1527.0,492.5 L1529.0,489.5 L1531.0,492.5 L1533.0,489.5 L1535.0,492.5 L1537.0,489.5 L1539.0,492.5 L1541.0,489.5 L1543.0,492.5 L1545.0,489.5 L1547.0,492.5 L1549.0,489.5 L1551.0,492.5 L1553.0,489.5 L1555.0,492.5 L1557.0,489.5 L1559.0,492.5 L1561.0,489.5 L1563.0,492.5 L1565.0,489.5 L1567.0,492.5 L1569.0,489.5 L1571.0,492.5 L1573.0,489.5 L1575.0,492.5 L1577.0,489.5 L1579.0,492.5 L1581.0,489.5 L1583.0,492.5 L1585.0,489.5 L1587.0,492.5 L1589.0,489.5 L1591.0,492.5 L1593.0,489.5 L1595.0,492.5 L1597.0,489.5 L1599.0,492.5 L1601.0,489.5 L1603.0,492.5 L1605.0,489.5 L1607.0,492.5 L1609.0,489.5 L1611.0,492.5 L1613.0,489.5 L1615.0,492.5 L1617.0,489.5 L1619.0,492.5 L1621.0,489.5 L1623.0,492.5 L1625.0,489.5 L1627.0,492.5 L1629.0,489.5 L1631.0,492.5 L1633.0,489.5 L1635.0,492.5 L1637.0,489.5 L1639.0,492.5 L1641.0,489.5 L1643.0,492.5 L1645.0,489.5 L1647.0,492.5 L1649.0,489.5 L1651.0,492.5 L1653.0,489.5 L1655.0,492.5 L1657.0,489.5 L1659.0,492.5 L1661.0,489.5 L1663.0,492.5 L1665.0,489.5 L1667.0,492.5 L1669.0,489.5 L1671.0,492.5 L1673.0,489.5 L1675.0,492.5 L1677.0,489.5 L1679.0,492.5 L1681.0,489.5 L1683.0,492.5 L1685.0,489.5 L1687.0,492.5 L1689.0,489.5 L1691.0,492.5 L1693.0,489.5 L1695.0,492.5 L1697.0,489.5 L1699.0,492.5 L1701.0,489.5 L1703.0,492.5 L1705.0,489.5 L1707.0,492.5 L1709.0,489.5 L1711.0,492.5 L1713.0,489.5 L1715.0,492.5 L1717.0,489.5 L1719.0,492.5 L1721.0,489.5 L1723.0,492.5 L1725.0,489.5 L1727.0,492.5 L1729.0,489.5 L1731.0,492.5 L1733.0,489.5 L1735.0,492.5 L1737.0,489.5 L1739.0,492.5 L1741.0,489.5 L1743.0,492.5 L1745.0,489.5 L1747.0,492.5 L1749.0,489.5 L1751.0,492.5 L1753.0,489.5 L1755.0,492.5 L1757.0,489.5 L1759.0,492.5 L1761.0,489.5 L1763.0,492.5 L1765.0,489.5 L1767.0,492.5 L1769.0,489.5 L1771.0,492.5"/><path d="M1771.0,492.5 L1773.0,489.5 L1775.0,492.5 L1777.0,489.5 L1779.0,492.5 L1781.0,489.5 L1783.0,492.5 L1785.0,489.5 L1787.0,492.5 L1789.0,489.5 L1791.0,492.5 L1793.0,489.5 L1795.0,492.5 L1797.0,489.5 L1799.0,492.5 L1801.0,489.5 L1803.0,492.5 L1805.0,489.5 L1807.0,492.5 L1809.0,489.5 L1811.0,492.5 L1813.0,489.5 L1815.0,492.5 L1817.0,489.5 L1819.0,492.5 L1821.0,489.5 L1823.0,492.5 L1825.0,489.5 L1827.0,492.5 L1829.0,489.5 L1831.0,492.5 L1833.0,489.5 L1835.0,492.5 L1837.0,489.5 L1839.0,492.5 L1841.0,489.5 L1843.0,492.5 L1845.0,489.5 L1847.0,492.5 L1849.0,489.5 L1851.0,492.5 L1853.0,489.5 L1855.0,492.5 L1857.0,489.5 L1859.0,492.5 L1861.0,489.5 L1863.0,492.5 L1865.0,489.5 L1867.0,492.5 L1869.0,489.5 L1871.0,492.5 L1873.0,489.5 L1875.0,492.5 L1877.0,489.5 L1879.0,492.5 L1881.0,489.5 L1883.0,492.5 L1885.0,489.5 L1887.0,492.5 L1889.0,489.5 L1891.0,492.5 L1893.0,489.5 L1895.0,492.5 L1897.0,489.5 L1899.0,492.5 L1901.0,489.5 L1903.0,492.5 L1905.0,489.5 L1907.0,492.5 L1909.0,489.5 L1911.0,492.5 L1913.0,489.5 L1915.0,492.5 L1917.0,489.5 L1919.0,492.5 L1921.0,489.5 L1923.0,492.5 L1925.0,489.5 L1927.0,492.5 L1929.0,489.5 L1931.0,492.5 L1933.0,489.5 L1935.0,492.5 L1937.0,489.5 L1939.0,492.5 L1941.0,489.5"/><path d="M731.0,519.5 L733.0,516.5 L735.0,519.5 L737.0,516.5 L739.0,519.5 L741.0,516.5"/><path d="M1811.0,519.5 L1813.0,516.5 L1815.0,519.5 L1817.0,516.5 L1819.0,519.5 L1821.0,516.5"/><path d="M1821.0,519.5 L1823.0,516.5 L1825.0,519.5 L1827.0,516.5 L1829.0,519.5 L1831.0,516.5 L1833.0,519.5 L1835.0,516.5 L1837.0,519.5 L1839.0,516.5 L1841.0,519.5 L1843.0,516.5 L1845.0,519.5 L1847.0,516.5 L1849.0,519.5 L1851.0,516.5 L1853.0,519.5 L1855.0,516.5 L1857.0,519.5 L1859.0,516.5 L1861.0,519.5 L1863.0,516.5 L1865.0,519.5 L1867.0,516.5 L1869.0,519.5 L1871.0,516.5 L1873.0,519.5 L1875.0,516.5 L1877.0,519.5 L1879.0,516.5 L1881.0,519.5 L1883.0,516.5 L1885.0,519.5 L1887.0,516.5 L1889.0,519.5 L1891.0,516.5 L1893.0,519.5 L1895.0,516.5 L1897.0,519.5 L1899.0,516.5 L1901.0,519.5"/><path d="M811.0,600.5 L813.0,597.5 L815.0,600.5 L817.0,597.5 L819.0,600.5 L821.0,597.5"/><path d="M821.0,600.5 L823.0,597.5 L825.0,600.5 L827.0,597.5 L829.0,600.5 L831.0,597.5"/><path d="M711.0,708.5 L713.0,705.5 L715.0,708.5 L717.0,705.5 L719.0,708.5 L721.0,705.5"/><path d="M851.0,762.5 L853.0,759.5 L855.0,762.5 L857.0,759.5 L859.0,762.5 L861.0,759.5"/><path d="M871.0,789.5 L873.0,786.5 L875.0,789.5 L877.0,786.5 L879.0,789.5 L881.0,786.5"/><path d="M871.0,870.5 L873.0,867.5 L875.0,870.5 L877.0,867.5 L879.0,870.5 L881.0,867.5"/><path d="M731.0,924.5 L733.0,921.5 L735.0,924.5 L737.0,921.5 L739.0,924.5 L741.0,921.5"/><path d="M830.0,600.5 L832.0,597.5 L834.0,600.5 L836.0,597.5 L838.0,600.5 L840.0,597.5 L842.0,600.5 L844.0,597.5 L846.0,600.5 L848.0,597.5 L850.0,600.5 L852.0,597.5 L854.0,600.5 L856.0,597.5 L858.0,600.5 L860.0,597.5 L862.0,600.5 L864.0,597.5 L866.0,600.5 L868.0,597.5 L870.0,600.5 L872.0,597.5 L874.0,600.5 L876.0,597.5 L878.0,600.5 L880.0,597.5 L882.0,600.5 L884.0,597.5 L886.0,600.5 L888.0,597.5 L890.0,600.5 L892.0,597.5 L894.0,600.5 L896.0,597.5 L898.0,600.5 L900.0,597.5 L902.0,600.5 L904.0,597.5 L906.0,600.5 L908.0,597.5 L910.0,600.5 L912.0,597.5 L914.0,600.5 L916.0,597.5 L918.0,600.5 L920.0,597.5 L922.0,600.5 L924.0,597.5 L926.0,600.5 L928.0,597.5 L930.0,600.5 L932.0,597.5 L934.0,600.5 L936.0,597.5 L938.0,600.5 L940.0,597.5 L942.0,600.5 L944.0,597.5 L946.0,600.5 L948.0,597.5 L950.0,600.5 L952.0,597.5 L954.0,600.5 L956.0,597.5 L958.0,600.5 L960.0,597.5 L962.0,600.5 L964.0,597.5 L966.0,600.5 L968.0,597.5 L970.0,600.5"/></g></svg></div>
<svg style="left:0;top:0" width="1" height="1"><circle cx="679" cy="309.8" r="7.2" fill="#f2c55c"/><path d="M674.8,312 h8.4 v6.7 h-8.4 z" fill="#f2c55c"/><line x1="675.3" y1="321" x2="682.7" y2="321" stroke="#dfe1e5" stroke-width="1.7"/><line x1="676.6" y1="324" x2="681.4" y2="324" stroke="#dfe1e5" stroke-width="1.7" stroke-linecap="round"/></svg>
<div class="t" style="left:599px;top:924px;color:#a9abb0;letter-spacing:0.3px">while n&lt;101</div>

<!-- RUN PANEL -->
<div id="run" class="a"></div>
<div class="a" style="left:53px;top:1014px;width:2094px;height:1px;background:#1e1f22"></div>
<div class="a" style="left:53px;top:1066px;width:2094px;height:2px;background:#1e1f22"></div>
<div class="a" style="left:108px;top:1068px;width:2039px;height:69px;background:#1e1f22"></div>
<div class="t" style="left:81px;top:974px;letter-spacing:0.9px;-webkit-text-stroke:0.55px #dfe1e5">Run</div>
<svg style="left:184.0px;top:972.0px" width="21" height="21" viewBox="0 0 22 22"><defs><linearGradient id="pb" x1="0" y1="0" x2="1" y2="1"><stop offset="0" stop-color="#5a9fd4"/><stop offset="1" stop-color="#306998"/></linearGradient><linearGradient id="py" x1="0" y1="0" x2="1" y2="1"><stop offset="0" stop-color="#ffe873"/><stop offset="1" stop-color="#ffd43b"/></linearGradient></defs><path d="M6.5,3 a2.5,2.5 0 0 1 2.5,-2.5 h4.5 a2.5,2.5 0 0 1 2.5,2.5 v6 a2.5,2.5 0 0 1 -2.5,2.5 h-4.5 a2.5,2.5 0 0 0 -2.5,2.5 v2.5 h-2.5 a3.5,3.5 0 0 1 -3.5,-3.5 v-3.5 a3.5,3.5 0 0 1 3.5,-3.5 h7.2 v-0.8 h-4.7 z" fill="url(#pb)"/><path d="M15.5,19 a2.5,2.5 0 0 1 -2.5,2.5 h-4.5 a2.5,2.5 0 0 1 -2.5,-2.5 v-6 a2.5,2.5 0 0 1 2.5,-2.5 h4.5 a2.5,2.5 0 0 0 2.5,-2.5 v-2.5 h2.5 a3.5,3.5 0 0 1 3.5,3.5 v3.5 a3.5,3.5 0 0 1 -3.5,3.5 h-7.2 v0.8 h4.7 z" fill="url(#py)"/><circle cx="9.3" cy="3.2" r="1" fill="#1e1f22"/><circle cx="12.7" cy="18.8" r="1" fill="#1e1f22"/></svg>
<svg style="left:0;top:0" width="1" height="1"><circle cx="202.7" cy="975.2" r="5.5" fill="#2b2d30"/><circle cx="202.7" cy="975.2" r="4" fill="#5fb865"/></svg>
<div class="t" style="left:212px;top:974px;letter-spacing:0px">main</div>
<svg style="left:0;top:0" width="1" height="1"><g stroke="#8c8f94" stroke-width="1.5"><line x1="284" y1="979" x2="294" y2="989"/><line x1="294" y1="979" x2="284" y2="989"/></g></svg>
<div class="a" style="left:156px;top:1010px;width:156px;height:5px;border-radius:2.5px;background:#5a5d63"></div>
<svg style="left:0;top:0" width="1" height="1"><g transform="translate(61.9,1031.4) scale(0.93) translate(-2002.8,-11)" fill="none" stroke-width="1.75" stroke-linejoin="round"><path d="M2011.3,30.3 A8.3,8.3 0 1 1 2019,17.2" stroke="#ced0d6"/><polyline points="2020,11 2020,18 2013,18" stroke="#ced0d6" stroke-linejoin="miter"/><path d="M2015.4,25 a1,1 0 0 1 1.5,-0.9 L2024,28.2 a1,1 0 0 1 0,1.7 L2016.9,34 a1,1 0 0 1 -1.5,-0.9 Z" fill="#1f3523" stroke="#5fb865"/></g><rect x="103" y="1034" width="16.5" height="16.5" rx="2.5" fill="#5e3838" stroke="#db5c5c" stroke-width="1.6"/><line x1="136.5" y1="1027" x2="136.5" y2="1057" stroke="#43454a" stroke-width="1"/><g fill="#ced0d6"><circle cx="161" cy="1034.5" r="1.7"/><circle cx="161" cy="1041.7" r="1.7"/><circle cx="161" cy="1049" r="1.7"/></g><g stroke="#5a5d63" stroke-width="1.5" fill="none"><line x1="80" y1="1097" x2="80" y2="1114"/><polyline points="73,1104 80,1097 87,1104"/><line x1="80" y1="1133" x2="80" y2="1140"/></g></svg>
<div class="code" style="position:absolute;left:130px;top:1075px;line-height:20px;color:#bcbec4">D:\PsychoPy2024_2_4\python.exe C:\Users\lenovo\Desktop\test\main.py</div>

<div class="a" style="left:969px;top:282px;width:800px;height:630px;border-radius:6px;background:#808080;box-shadow:0 6px 22px rgba(0,0,0,0.45);overflow:hidden"><div class="a" style="left:0;top:0;width:800px;height:30px;background:#eef2f8"></div></div>
<div class="t" style="left:999px;top:291px;font-size:12.5px;line-height:13px;color:#1a1a1a;letter-spacing:-0.85px">PsychoPy</div>
<svg style="left:0;top:0" width="1" height="1"><circle cx="984" cy="295" r="6.5" fill="#777"/><path d="M980,300 L986,289 M983,301 L989,290" stroke="#eee" stroke-width="1.3"/><rect x="983.5" y="296" width="8" height="6.5" rx="1.5" fill="#fff" stroke="#666" stroke-width="1"/><line x1="1650" y1="296.5" x2="1660" y2="296.5" stroke="#000" stroke-width="1"/><rect x="1695.5" y="291.5" width="9" height="9" rx="1" fill="none" stroke="#c5c7ca" stroke-width="1"/><g stroke="#000" stroke-width="1"><line x1="1741" y1="291" x2="1751" y2="301"/><line x1="1751" y1="291" x2="1741" y2="301"/></g></svg>
<div class="t" style="left:1328px;top:596.5px;width:80px;text-align:center;font-size:31px;line-height:31px;color:#fff">26</div>
</body></html>
